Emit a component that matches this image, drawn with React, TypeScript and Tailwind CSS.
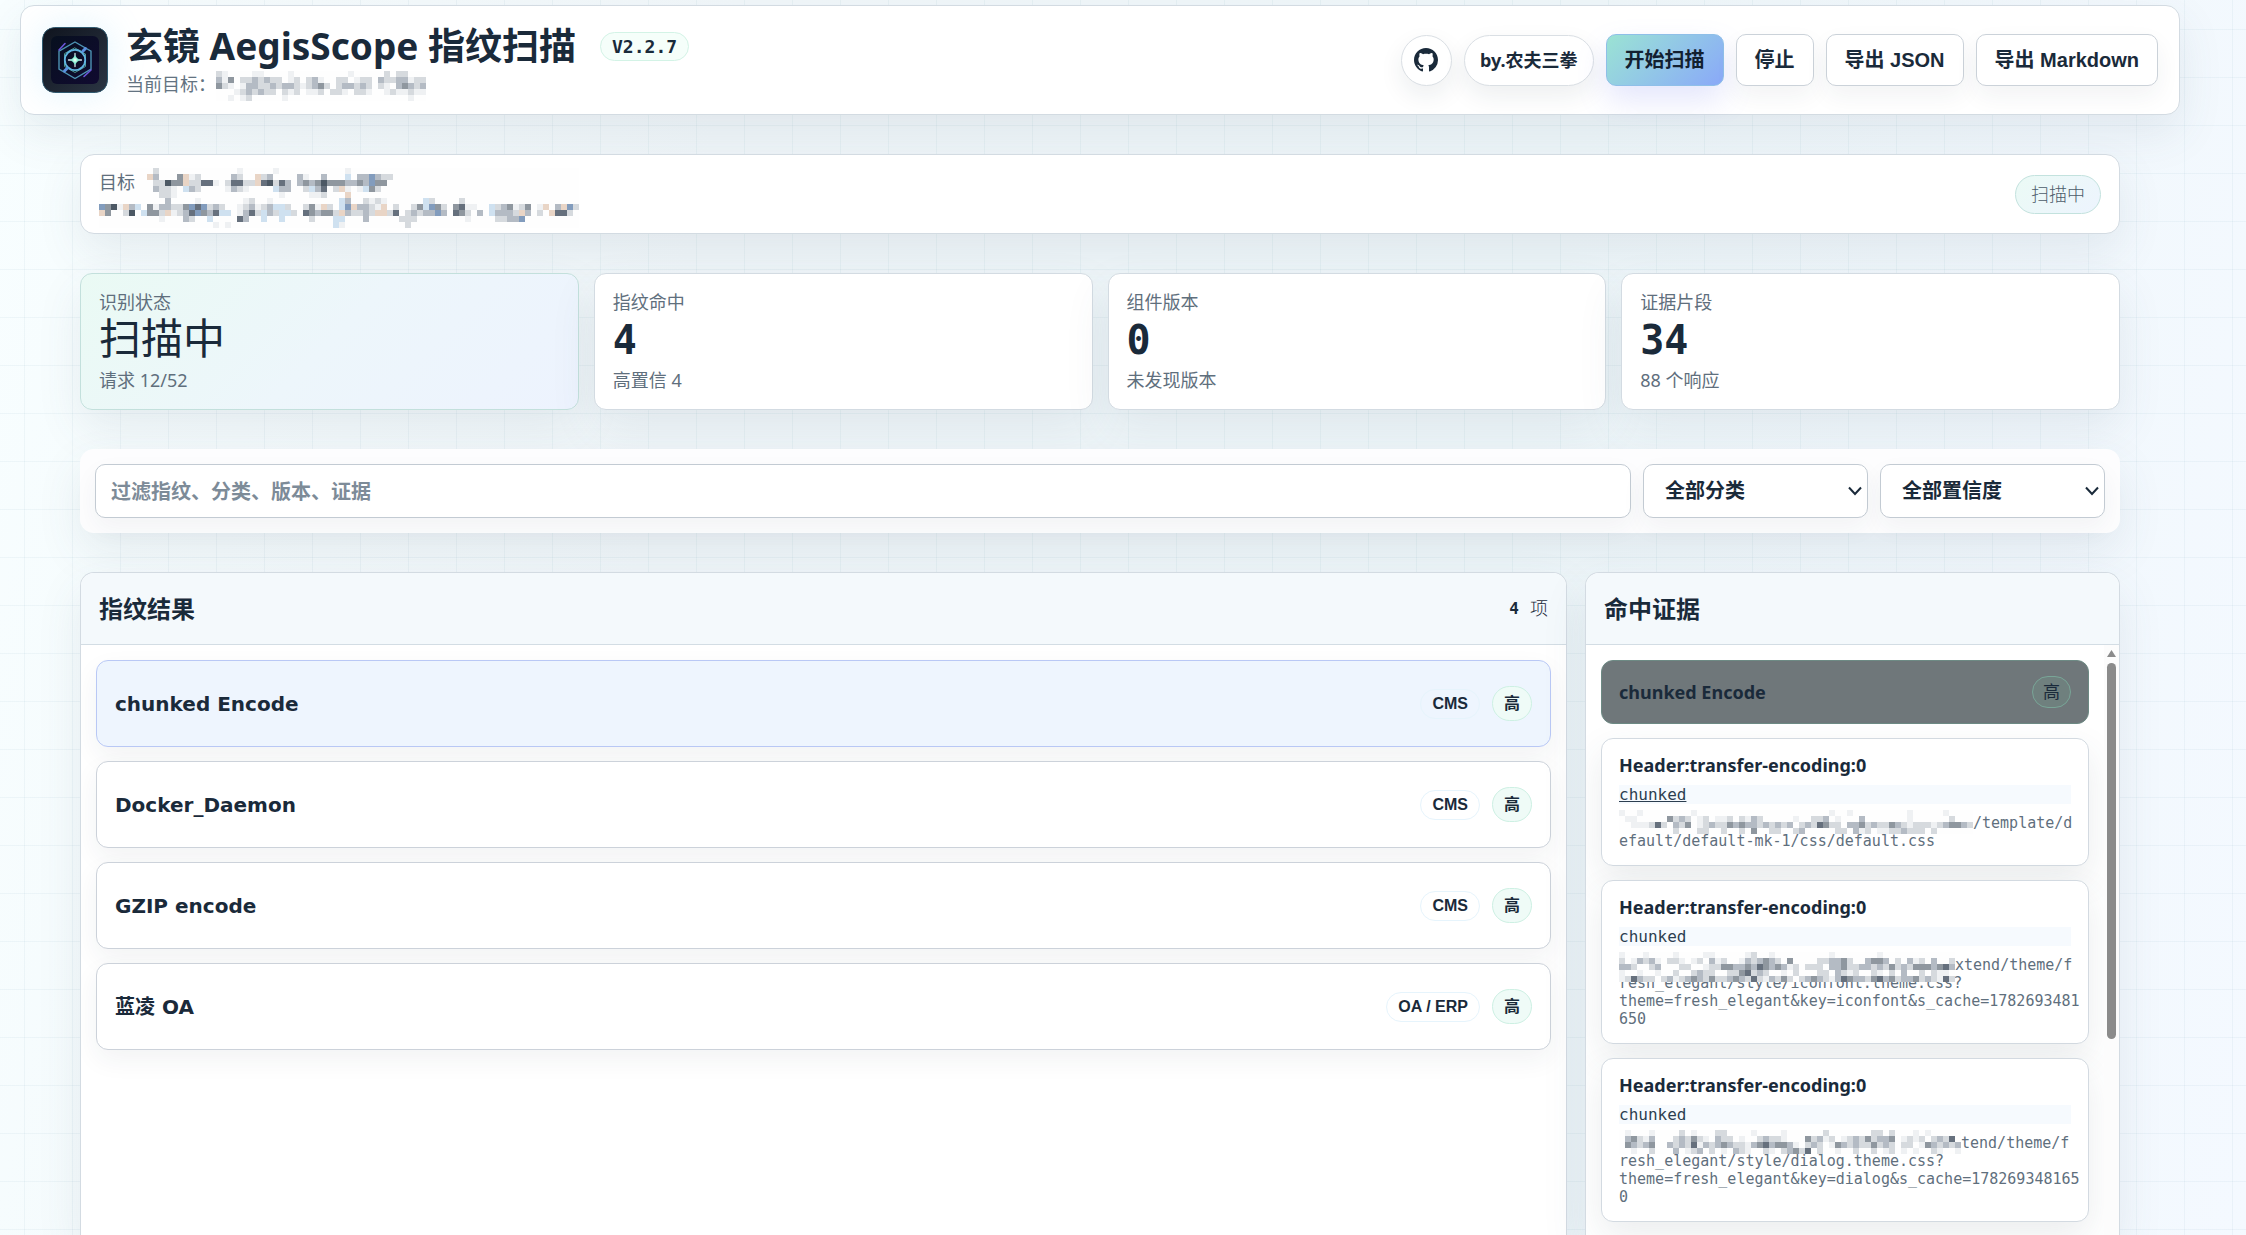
import { useState } from 'react';
import type { ReactNode } from 'react';
import clsx from 'clsx';

const BLOCK = 6;

const shades: Record<string, string> = {
    a: '#eff1f3',
    b: '#d6dade',
    c: '#b4bbc4',
    d: '#8f979f',
    e: '#66707d',
    f: '#4c5864',
    t: '#e9d5c6',
    s: '#cfe1f0',
    u: '#829cbd',
};

const headerMask = [
    'ba....aa....a.........a.....b.bb...',
    'cad.bbcbcbb.ab.bca..bb.abb.cbbccabb',
    'dba.accbbcbccbabcdb.bccbcb.ba.cdcbc',
    '...abcbcbb.bab.aab.bba.bba..abaabaa',
    '..a.ab.....a....................a..',
];

const targetMask = [
    '.........b.............a.....a...........a......................................',
    '........tc...dtab.....cb..tbc....ca..c...s.ccucbb...............................',
    '.........bbfddtbbeea.beebbtefbec.cdcdfdddccdcudd................................',
    '.........cbba.scb....acba....scc..bsce.bta.asdb.................................',
    '..........bba.................a....aab...t......................................',
    '...........c....a.......ab..a...........sc..baba......sb....b...................',
    'udfatcs.daccbbdueubcb..abcabcssb..bdatb.sutccbat.b..bdsudb.deaa..sbcdabd.at.ctub',
    'td..bf.sddbtabceudcess.acebscbssb.edcddbtcbbcbttbe.bcbccuc.edb.c.scccbtc.b.teeb.',
    '..........a...cb..s....ec..s..s....b...ss...c.....bbb........a....bbccu.........',
    '...................a.a.................sa..........b............................',
];

const evidenceMasks = [
    [
        'a..a........a......................a..a.........a.....a....',
        '.aa.....dbcb.ab.aab.bacb.....a..bbc.a...c.......a......b...',
        '..aaabeb.cbd.abcbbdcdccbcbcbc.bcbedbb.ccdbcbbdcbabbbabcddcb',
        '.........b...bb..b..b.d..bb..bc.....bb.cab.aabbcbbb.b......',
    ],
    [
        'a...a....a....aa.....ab..a.........a.......a............',
        'b.acbca.bba.ab.cab..acbcdcb.d....bbccdb..cddc.b.cab.c..b',
        'ccb..bc...bb..abbddccdcedcdcab.bbb.ccdbbccbcbdbcbdddcdec',
        'a..a..a..b..bcbb..bbdebcb..a.b...bb.cbab..ba.b.c..b.baa.',
        'abecbb.bcabcdcbdbbcdcbebacbdb.bcdcbacedccbdecdbccdbcbaeb',
    ],
    [
        '.a...a....b.a...bb....a....a......b.......bb.b...a.a....',
        '.cdbac...bcbdba.cbb.a..bcbba...dbcab.abcbdbccd.abab.bcbe',
        '.dcbcd..cbcbeacbcdcbbacdecddca.bcb.adcbcbbdbcb.bb.adcbcbc',
        '..a..b...c.abc.b.a.cba..ba.bcdbe.b..a..b..b.ab.a.a..ba..a',
    ],
];

const stats = [
    { label: '识别状态', value: '扫描中', note: '请求 12/52', accent: true },
    { label: '指纹命中', value: '4', note: '高置信 4' },
    { label: '组件版本', value: '0', note: '未发现版本' },
    { label: '证据片段', value: '34', note: '88 个响应' },
];

const results = [
    { name: 'chunked Encode', category: 'CMS', level: '高' },
    { name: 'Docker_Daemon', category: 'CMS', level: '高' },
    { name: 'GZIP encode', category: 'CMS', level: '高' },
    { name: '蓝凌 OA', category: 'OA / ERP', level: '高' },
];

const evidence = [
    { mask: 0, lines: ['/template/d', 'efault/default-mk-1/css/default.css'] },
    {
        mask: 1,
        lines: [
            'xtend/theme/f',
            'resh_elegant/style/iconfont.theme.css?',
            'theme=fresh_elegant&key=iconfont&s_cache=1782693481',
            '650',
        ],
    },
    {
        mask: 2,
        lines: [
            'tend/theme/f',
            'resh_elegant/style/dialog.theme.css?',
            'theme=fresh_elegant&key=dialog&s_cache=178269348165',
            '0',
        ],
    },
];

const buttonBase =
    'h-[52px] rounded-[10px] border px-[18px] text-[20px] font-bold whitespace-nowrap';

// Pixelated cover for hosts and addresses that must not be shown
const Mask = ({ rows, className }: { rows: string[]; className?: string }) => {
    const cols = Math.max(...rows.map((row) => row.length));
    return (
        <svg
            width={cols * BLOCK}
            height={rows.length * BLOCK}
            shapeRendering="crispEdges"
            aria-hidden="true"
            className={className}
        >
            <rect width="100%" height="100%" fill="#fefefe" />
            {rows.map((row, y) =>
                row.split('').map((shade, x) =>
                    shade === '.' ? null : (
                        <rect
                            key={`${x}-${y}`}
                            x={x * BLOCK}
                            y={y * BLOCK}
                            width={BLOCK}
                            height={BLOCK}
                            fill={shades[shade]}
                        />
                    )
                )
            )}
        </svg>
    );
};

const Logo = () => (
    <svg viewBox="0 0 66 66" className="size-[66px] shrink-0 rounded-[12px] shadow-[0_0_36px_rgba(125,211,252,0.22)]">
        <defs>
            <linearGradient id="frame" x1="0" y1="0" x2="1" y2="1">
                <stop offset="0" stopColor="#0f141e" />
                <stop offset="1" stopColor="#2b3543" />
            </linearGradient>
            <linearGradient id="screen" x1="0" y1="0" x2="1" y2="1">
                <stop offset="0" stopColor="#07101f" />
                <stop offset="1" stopColor="#100a30" />
            </linearGradient>
            <radialGradient id="core">
                <stop offset="0" stopColor="#ffffff" />
                <stop offset="0.5" stopColor="#8ff0d4" />
                <stop offset="1" stopColor="#5cc9c0" />
            </radialGradient>
        </defs>
        <rect x="0.5" y="0.5" width="65" height="65" rx="12" fill="url(#frame)" stroke="#2f5a70" />
        <rect x="9" y="9" width="48" height="48" rx="6" fill="url(#screen)" />
        <g fill="none" strokeLinecap="round">
            <path d="M33 15 49 24.2v18L33 51.5 17 42.2v-18z" stroke="#4d93b3" strokeWidth="1.4" />
            <path d="M33 21 43.5 27v12.5L33 45.5 22.5 39.5V27z" stroke="#4f9a8d" strokeWidth="1" />
            <circle cx="33" cy="33" r="10.2" stroke="#5fb3e0" strokeWidth="1.8" />
            <path d="m17 23 6-6.5M42 49.5l7-6.5" stroke="#6a55d8" strokeWidth="1.6" />
            <path d="m41 24 2.5-2.5M22.5 44l2.5-2.5" stroke="#5a8fe0" strokeWidth="3" />
            <path d="M33 26.5v13M26.5 33h13" stroke="#d5e6ea" strokeWidth="1.3" />
        </g>
        <path d="m33 28 2 3 3 2-3 2-2 3-2-3-3-2 3-2z" fill="url(#core)" />
    </svg>
);

const GithubMark = () => (
    <svg viewBox="0 0 16 16" fill="currentColor" className="size-6" aria-hidden="true">
        <path d="M8 0C3.58 0 0 3.58 0 8c0 3.54 2.29 6.53 5.47 7.59.4.07.55-.17.55-.38 0-.19-.01-.82-.01-1.49-2.01.37-2.53-.49-2.69-.94-.09-.23-.48-.94-.82-1.13-.28-.15-.68-.52-.01-.53.63-.01 1.08.58 1.23.82.72 1.21 1.87.87 2.33.66.07-.52.28-.87.51-1.07-1.78-.2-3.64-.89-3.64-3.95 0-.87.31-1.59.82-2.15-.08-.2-.36-1.02.08-2.12 0 0 .67-.21 2.2.82.64-.18 1.32-.27 2-.27s1.36.09 2 .27c1.53-1.04 2.2-.82 2.2-.82.44 1.1.16 1.92.08 2.12.51.56.82 1.27.82 2.15 0 3.07-1.87 3.75-3.65 3.95.29.25.54.73.54 1.48 0 1.07-.01 1.93-.01 2.2 0 .21.15.46.55.38A8.01 8.01 0 0 0 16 8c0-4.42-3.58-8-8-8z" />
    </svg>
);

const FilterSelect = ({ label, options }: { label: string; options: string[] }) => (
    <div className="relative w-[225px] shrink-0">
        <select
            aria-label={label}
            className="h-[54px] w-full appearance-none rounded-[10px] border border-[#c3cbd3] bg-white px-[21px] text-[20px] font-bold shadow-[0_10px_24px_rgba(30,50,70,0.05)]"
        >
            {options.map((option) => (
                <option key={option}>{option}</option>
            ))}
        </select>
        <svg
            viewBox="0 0 14 10"
            fill="none"
            stroke="currentColor"
            strokeWidth="2"
            className="pointer-events-none absolute top-[22px] right-[6px] h-[10px] w-[14px]"
        >
            <path d="m1 1.5 6 6.500 6-6.500" />
        </svg>
    </div>
);

const Panel = ({ title, extra, children }: { title: string; extra?: ReactNode; children: ReactNode }) => (
    <section className="flex min-h-0 min-w-0 flex-col overflow-hidden rounded-t-[14px] border border-b-0 border-[#d3dbe2] bg-white shadow-[0_18px_45px_rgba(70,90,110,0.1)]">
        <div className="flex h-[72px] shrink-0 items-center justify-between border-b border-[#d3dde4] bg-[#f4f9fc] px-[18px]">
            <h2 className="text-[24px] font-bold">{title}</h2>
            {extra}
        </div>
        {children}
    </section>
);

export default function App() {
    const [selected, setSelected] = useState('chunked Encode');

    return (
        <div
            className="flex h-screen flex-col gap-[39px] overflow-hidden bg-[#f3f9fb] bg-[linear-gradient(rgba(110,160,180,0.08)_1px,transparent_1px),linear-gradient(90deg,rgba(110,160,180,0.08)_1px,transparent_1px),linear-gradient(100deg,#f8feff_0%,#f1f7fa_30%,#eff7fa_65%,#f4f9ff_100%)] bg-size-[48px_48px,48px_48px,100%_100%] bg-position-[24px_29px,24px_29px,0_0] pt-[5px] pr-[66px] pl-5 font-['Noto_Sans','Noto_Sans_CJK_SC',sans-serif] text-[#1a2a3a]"
        >
            {/* Top bar */}
            <header className="flex h-[110px] shrink-0 items-center justify-between rounded-[14px] border border-[#d3dbe2] bg-white px-[21px] shadow-[0_18px_45px_rgba(70,90,110,0.1)]">
                <div className="flex items-center gap-[18px]">
                    <Logo />
                    <div>
                        <div className="flex items-center gap-6">
                            <h1 className="text-[37px] leading-[46px] font-bold whitespace-nowrap">
                                玄镜 AegisScope 指纹扫描
                            </h1>
                            <span className="rounded-full border border-[#d3f3e6] bg-[#f5fefa] px-[11px] font-['DejaVu_Sans_Mono',monospace] text-[18px] leading-[27px] font-bold">
                                V2.2.7
                            </span>
                        </div>
                        <div className="mt-[2px] flex h-[26px] items-center text-[18px] leading-[26px] text-[#637381]">
                            当前目标：
                            <Mask rows={headerMask} className="-mt-0.5 -mb-1.5" />
                        </div>
                    </div>
                </div>

                <div className="flex items-center gap-3">
                    <a
                        href="#github"
                        aria-label="GitHub"
                        className="flex size-[51px] items-center justify-center rounded-full border border-[#dadfe4] bg-white shadow-[0_10px_24px_rgba(30,50,70,0.08)]"
                    >
                        <GithubMark />
                    </a>
                    <a
                        href="#author"
                        className="flex h-[51px] items-center rounded-full border border-[#dadfe4] bg-white px-[15px] text-[18px] font-bold whitespace-nowrap shadow-[0_10px_24px_rgba(30,50,70,0.08)]"
                    >
                        by.农夫三拳
                    </a>
                    <button
                        className={clsx(
                            buttonBase,
                            'border-[#8fbfe8] bg-linear-135 from-[#9be3d3] to-[#8aa8f8] text-[#122030] shadow-[0_14px_30px_rgba(120,130,240,0.2)]'
                        )}
                    >
                        开始扫描
                    </button>
                    {['停止', '导出 JSON', '导出 Markdown'].map((label) => (
                        <button
                            key={label}
                            className={clsx(
                                buttonBase,
                                "border-[#cbd2d9] bg-white font-['Liberation_Sans','Noto_Sans_CJK_SC',sans-serif] shadow-[0_10px_24px_rgba(30,50,70,0.06)]"
                            )}
                        >
                            {label}
                        </button>
                    ))}
                </div>
            </header>

            <main className="flex min-h-0 flex-1 flex-col gap-[39px] px-[60px]">
                {/* Current target */}
                <section className="flex h-20 shrink-0 items-center justify-between rounded-[14px] border border-[#d3dbe2] bg-white px-[18px] shadow-[0_18px_45px_rgba(70,90,110,0.1)]">
                    <div className="relative h-[52px] text-[18px] leading-[28px] text-[#5f6f7d]">
                        <Mask rows={targetMask} />
                        <span className="absolute top-0 left-0">目标</span>
                    </div>
                    <span className="rounded-full border border-[#c3e2de] bg-linear-135 from-[#ebfaf5] to-[#edf4fe] px-[15px] text-[18px] leading-[37px] font-light text-[#4c5c6a]">
                        扫描中
                    </span>
                </section>

                {/* Summary */}
                <section className="grid shrink-0 grid-cols-4 gap-[15px]">
                    {stats.map((stat) => (
                        <div
                            key={stat.label}
                            className={clsx(
                                'rounded-[12px] border px-[18px] pt-[17px] pb-[18px] text-[18px] leading-[22px] text-[#5f6f7d] shadow-[0_18px_45px_rgba(70,90,110,0.1)]',
                                stat.accent
                                    ? 'border-[#c3e0dc] bg-linear-135 from-[#eafaf4] via-[#edf6fb] to-[#edf3fe]'
                                    : 'border-[#d3dbe2] bg-white'
                            )}
                        >
                            <p>{stat.label}</p>
                            <p
                                className={clsx(
                                    "mb-[2px] font-['DejaVu_Sans_Mono','Noto_Sans_CJK_SC',monospace] leading-[54px] text-[#1a2a3a]",
                                    stat.accent ? 'text-[42px] font-normal' : 'text-[40px] font-bold'
                                )}
                            >
                                {stat.value}
                            </p>
                            <p>{stat.note}</p>
                        </div>
                    ))}
                </section>

                {/* Filters */}
                <section className="flex shrink-0 gap-3 rounded-[14px] bg-[#fdfdfe] p-[15px] shadow-[0_18px_45px_rgba(70,90,110,0.1)]">
                    <input
                        type="text"
                        aria-label="过滤指纹、分类、版本、证据"
                        placeholder="过滤指纹、分类、版本、证据"
                        className="h-[54px] min-w-0 flex-1 rounded-[10px] border border-[#c3cbd3] bg-white px-[15px] text-[20px] font-bold shadow-[0_10px_24px_rgba(30,50,70,0.05)] placeholder:text-[#7d8b98]"
                    />
                    <FilterSelect label="分类" options={['全部分类', 'CMS', 'OA / ERP']} />
                    <FilterSelect label="置信度" options={['全部置信度', '高', '中', '低']} />
                </section>

                <div className="grid min-h-0 flex-1 grid-cols-[minmax(0,1fr)_535px] gap-[18px]">
                    <Panel
                        title="指纹结果"
                        extra={
                            <span className="flex items-center gap-[11px] text-[18px] font-light">
                                <b className="font-['DejaVu_Sans_Mono',monospace] text-[16px] font-bold">4</b>项
                            </span>
                        }
                    >
                        <div className="flex flex-col gap-[14px] p-[15px]">
                            {results.map((item) => (
                                <button
                                    key={item.name}
                                    onClick={() => setSelected(item.name)}
                                    className={clsx(
                                        'flex h-[87px] items-center gap-3 rounded-[12px] border px-[18px] text-left shadow-[0_10px_26px_rgba(30,50,70,0.06)]',
                                        selected === item.name
                                            ? 'border-[#b9c8f5] bg-[#eef5fe]'
                                            : 'border-[#ccd2da] bg-white'
                                    )}
                                >
                                    <span className="min-w-0 flex-1 truncate font-['DejaVu_Sans','Noto_Sans_CJK_SC',sans-serif] text-[20px] font-bold">
                                        {item.name}
                                    </span>
                                    <span className="rounded-full border border-[#e6f4fc] px-[11px] font-['Liberation_Sans',sans-serif] text-[16px] leading-[28px] font-bold">
                                        {item.category}
                                    </span>
                                    <span className="rounded-full border border-[#cdf0e3] bg-[#effbf7] px-[11px] text-[16px] leading-[33px] font-bold">
                                        {item.level}
                                    </span>
                                </button>
                            ))}
                        </div>
                    </Panel>

                    <Panel title="命中证据">
                        <div className="flex min-h-0 flex-1 overflow-hidden">
                            <div className="flex min-w-0 flex-1 flex-col gap-[14px] p-[15px]">
                                <div className="flex h-[64px] shrink-0 items-center justify-between rounded-[12px] border border-[#6d8a84] bg-[#6f777a] px-[17px]">
                                    <strong className="text-[18px] font-bold">chunked Encode</strong>
                                    <span className="rounded-full border border-[#79a597] bg-[#6f807e] px-[10px] text-[17px] leading-[30px]">
                                        高
                                    </span>
                                </div>
                                {evidence.map((item, index) => (
                                    <article
                                        key={index}
                                        className="shrink-0 rounded-[12px] border border-[#d3dae1] bg-white px-[17px] pt-[13px] pb-[15px] shadow-[0_14px_36px_rgba(60,80,90,0.1)]"
                                    >
                                        <h3 className="text-[18px] leading-[26px] font-bold">
                                            Header:transfer-encoding:0
                                        </h3>
                                        <p className="mt-[7px] bg-[#f6fafe] font-['DejaVu_Sans_Mono',monospace] text-[16px] leading-[19px] text-[#2c3e50]">
                                            {index === 0 ? <u>chunked</u> : 'chunked'}
                                        </p>
                                        <div className="mt-[10px] font-['DejaVu_Sans_Mono',monospace] text-[15px] leading-[18px] whitespace-nowrap text-[#5f6f7d]">
                                            {item.lines.map((line, row) => (
                                                <p key={line} className={clsx(row === 0 && 'flex h-[18px]')}>
                                                    {row === 0 && (
                                                        <Mask
                                                            rows={evidenceMasks[item.mask]}
                                                            className="relative -mt-1 shrink-0"
                                                        />
                                                    )}
                                                    {line}
                                                </p>
                                            ))}
                                        </div>
                                    </article>
                                ))}
                            </div>
                            {/* Scrollbar */}
                            <div className="flex w-[15px] flex-col items-center gap-[6px] bg-[#fcfcfc] pt-[5px]">
                                <svg viewBox="0 0 9 7" className="h-[7px] w-[9px]" fill="#8b8b8b">
                                    <path d="M4.5 0 9 7H0z" />
                                </svg>
                                <div className="h-[376px] w-[9px] rounded-full bg-[#8b8b8b]" />
                            </div>
                        </div>
                    </Panel>
                </div>
            </main>
        </div>
    );
}
